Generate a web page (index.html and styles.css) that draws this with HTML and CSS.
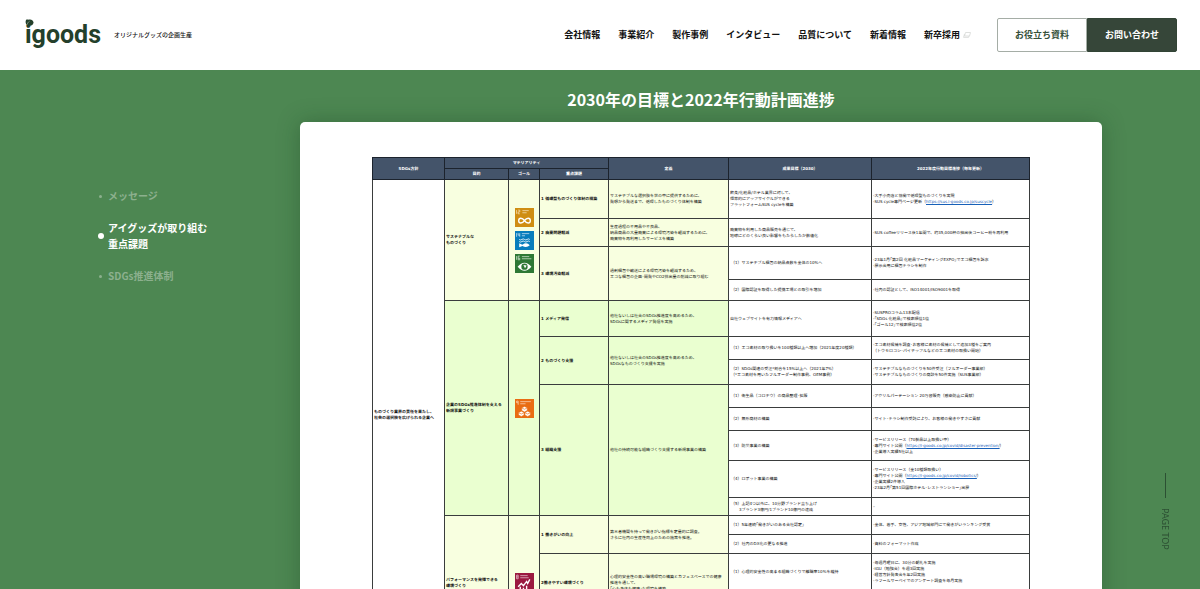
FILE: index.html
```html
<!DOCTYPE html>
<html lang="ja">
<head>
<meta charset="utf-8">
<meta name="viewport" content="width=device-width, initial-scale=1">
<title>アイグッズが取り組む重点課題 | igoods</title>
<link rel="stylesheet" href="styles.css">
</head>
<body>
<header class="header">
  <a class="logo" href="#">igoods<svg class="logo-leaf" viewBox="0 0 9 9" aria-hidden="true"><path d="M1 1C2 0 3 1 4 .6 6 0 8 1 8.600 3.500 8 6 6 7 4.500 6.600L2.500 8.500 2 6C.5 5 .3 2.500 1 1z" fill="#24402b"/><path d="M2.300 5.500C2.500 4 3.300 3 4.500 2.300" stroke="#b9c7bb" stroke-width=".6" fill="none"/></svg></a>
  <p class="tagline">オリジナルグッズの企画生産</p>
  <nav class="nav" aria-label="メイン">
    <a href="#">会社情報</a>
    <a href="#">事業紹介</a>
    <a href="#">製作事例</a>
    <a href="#">インタビュー</a>
    <a href="#">品質について</a>
    <a href="#">新着情報</a>
    <a class="nav-ext" href="#">新卒採用<svg width="8" height="6" viewBox="0 0 8 6" aria-hidden="true"><path d="M2.500.5h5l-1 3.500h-5zM1.500 2L.6 5.400h5L6 4" fill="none" stroke="#d5d8d5" stroke-width=".8"/></svg></a>
  </nav>
  <div class="actions">
    <a class="btn" href="#">お役立ち資料</a>
    <a class="btn btn-dark" href="#">お問い合わせ</a>
  </div>
</header>
<div class="layout">
  <nav class="side" aria-label="ページ内">
    <a href="#message">メッセージ</a>
    <a class="current" href="#issues">アイグッズが取り組む<br>重点課題</a>
    <a href="#system">SDGs推進体制</a>
  </nav>
  <main class="main" id="issues">
    <h1>2030年の目標と2022年行動計画進捗</h1>
    <div class="card">
      <table>
        <colgroup><col class="c-policy"><col class="c-aim"><col class="c-goal"><col class="c-issue"><col class="c-def"><col class="c-target"><col class="c-plan"></colgroup>
        <thead>
          <tr class="h11"><th rowspan="2">SDGs方針</th><th colspan="3">マテリアリティ</th><th rowspan="2">定義</th><th rowspan="2">成果目標（2030）</th><th rowspan="2">2022年度行動目標進捗（毎年更新）</th></tr>
          <tr class="h11"><th>目的</th><th>ゴール</th><th>重点課題</th></tr>
        </thead>
        <tbody>
          <tr class="h39">
            <td class="b" rowspan="17">ものづくり業界の責任を果たし、<br>社会の選択肢を広げられる企業へ</td>
            <td class="b y" rowspan="4">サステナブルな<br>ものづくり</td>
            <td class="goal y" rowspan="4"><div class="tiles">
              <svg class="tile" viewBox="0 0 18 18" role="img" aria-label="目標12"><rect width="18" height="18" fill="#cf8d12"/><path d="M1.500 2v3.500M3 2h1.500v1.700H3v1.800h1.500M7 2.500h6M7 4.500h4" stroke="#f5e3bd" stroke-width=".7" fill="none"/><path d="M9 12C7 9 3.500 9 3.500 12s3.500 3 5.500 0 5.500-3 5.500 0-3.500 3-5.500 0z" fill="none" stroke="#fff" stroke-width="1.300"/></svg>
              <svg class="tile" viewBox="0 0 18 18" role="img" aria-label="目標14"><rect width="18" height="18" fill="#087dbc"/><path d="M1.500 2v3.500M3 2v2h1.700M4.500 2v3.500M6.500 2.500h7M6.500 4.500h3" stroke="#d0e7f4" stroke-width=".7" fill="none"/><path d="M4 8q1.200 1 2.500 0t2.500 0 2.500 0 2.500 0M4 10q1.200 1 2.500 0t2.500 0 2.500 0 2.500 0" stroke="#fff" stroke-width=".8" fill="none"/><path d="M4 11.500l3 1.500q4-3 7 .5-3 3-7 .7L4 15.500z" fill="#fff"/></svg>
              <svg class="tile" viewBox="0 0 18 18" role="img" aria-label="目標16"><rect width="18" height="18" fill="#2e7835"/><path d="M1.500 2v3.500M3 5.500V2h1.500M3 4h1.500v1.500H3M6.500 2.500h7M6.500 4.500h9" stroke="#d5e6d5" stroke-width=".7" fill="none"/><path d="M2.500 12Q9 4.500 15.500 12 9 19.500 2.500 12z" fill="#fff"/><circle cx="9" cy="12" r="3" fill="#2e7835"/><path d="M8 10.500l3 .5-1.500 2.500z" fill="#fff"/></svg>
            </div></td>
            <td class="b y">1 循環型ものづくり体制の構築</td>
            <td class="y">サステナブルな選択肢を世の中に提供するために、<br>発想から発送まで、循環したものづくり体制を構築</td>
            <td>飲食/化粧品/ホテル業界に対して、<br>恒常的にアップサイクルができる<br>プラットフォームSUS cycleを構築</td>
            <td>-大手小売店と協働で循環型ものづくりを実現<br>-SUS cycle専門ページ更新（<a href="#">https://sus.i-goods.co.jp/suscycle</a>）</td>
          </tr>
          <tr class="h28"><td class="b y">2 廃棄問題軽減</td><td class="y">生産過程の不用品や不良品、<br>納品商品の大量廃棄による環境汚染を軽減するために、<br>廃棄物を再利用したサービスを構築</td><td>廃棄物を利用した商品販売を通じて、<br>地球にどのくらい良い影響をもたらしたか数値化</td><td>-SUS coffeeリリース後1年間で、約35,000杯の抽出後コーヒー粉を再利用</td></tr>
          <tr class="h33"><td class="b y" rowspan="2">3 環境汚染軽減</td><td class="y" rowspan="2">過剰梱包や輸送による環境汚染を軽減するため、<br>エコな梱包の企画･開発やCO2排出量の削減に取り組む</td><td class="n">（1）サステナブル梱包の納品点数を全体の10%へ</td><td>-23年1月｢第2回 化粧品マーケティングEXPO｣でエコ梱包を訴求<br>-展示会用に梱包チラシを制作</td></tr>
          <tr class="h21"><td class="n">（2）国際認証を取得した提携工場との取引を増加</td><td>-社内の認証として、ISO14001/ISO9001を取得</td></tr>
          <tr class="h36">
            <td class="b g" rowspan="8">企業のSDGs推進体制を支える<br>新規事業づくり</td>
            <td class="goal g" rowspan="8"><div class="tiles"><svg class="tile" viewBox="0 0 18 18" role="img" aria-label="目標9"><rect width="18" height="18" fill="#e96c13"/><path d="M1.500 3.500h1.500V2H1.500v1.500M3 3.500v2M5 2.500h10M5 4.500h5" stroke="#f9d6bc" stroke-width=".7" fill="none"/><path d="M9 7l2.600 1.400v2.500L9 12.300l-2.600-1.400V8.400zM6 11.500l2.600 1.400v2.300L6 16.500l-2.600-1.300v-2.300zM12 11.500l2.600 1.400v2.300L12 16.500l-2.600-1.300v-2.300z" fill="#fff" stroke="#e96c13" stroke-width=".5"/><path d="M6.500 8.500L9 9.700l2.500-1.200M3.500 13L6 14.200 8.500 13M9.500 13l2.500 1.200 2.500-1.200" fill="none" stroke="#e96c13" stroke-width=".6"/></svg></div></td>
            <td class="b g">1 メディア発信</td><td class="g">他社ないしは社会のSDGs推進度を高めるため、<br>SDGsに関するメディア発信を実施</td><td>自社ウェブサイトを有力情報メディアへ</td><td>-SUSPROコラム13本配信<br>-｢SDGs 化粧品｣で検索順位1位<br>-｢ゴール12｣で検索順位2位</td>
          </tr>
          <tr class="h23"><td class="b g" rowspan="2">2 ものづくり支援</td><td class="g" rowspan="2">他社ないしは社会のSDGs推進度を高めるため、<br>SDGsなものづくり支援を実施</td><td class="n">（1）エコ素材の取り扱いを100種類以上へ増加（2021年度20種類）</td><td>-エコ素材候補を調査･お客様に素材の候補として追加3種をご案内<br>（トウモロコシ･パイナップルなどのエコ素材の取扱い開始）</td></tr>
          <tr class="h25"><td class="n">（2）SDGs関連の受注*割合を15%以上へ（2021年7%）<br>（*エコ素材を用いたフルオーダー制作事例、OEM事例）</td><td>-サステナブルなものづくりを50件受注（フルオーダー事業部）<br>-サステナブルなものづくりの商談を50件実施（SUS事業部）</td></tr>
          <tr class="h23"><td class="b g" rowspan="5">3 組織支援</td><td class="g" rowspan="5">他社の持続可能な組織づくり支援する新規事業の構築</td><td class="n">（1）衛生品（コロナウ）の商品整理･拡販</td><td>-アクリルパーテーション 20万台販売（感染防止に貢献）</td></tr>
          <tr class="h23"><td class="n">（2）無形商材の構築</td><td>-サイト･チラシ制作受託により、お客様の働きやすさに貢献</td></tr>
          <tr class="h30"><td class="n">（3）防災事業の構築</td><td>-サービスリリース（70製品以上取扱い中）<br>-専門サイト公開（<a href="#">https://i-goods.co.jp/covid/disaster-prevention/</a>）<br>-企業導入実績5社以上</td></tr>
          <tr class="h37"><td class="n">（4）ロボット事業の構築</td><td>-サービスリリース（全10種類取扱い）<br>-専門サイト公開（<a href="#">https://i-goods.co.jp/covid/robotics/</a>）<br>-企業実績2件導入<br>-23年2月｢第51回国際ホテル･レストランショー｣出展</td></tr>
          <tr class="h18"><td class="n">（5）上記4つ以外に、10分野ブランド立ち上げ<br>　　3ブランド3億円/1ブランド10億円の達成</td><td>–</td></tr>
          <tr class="h19">
            <td class="b y" rowspan="5">パフォーマンスを発揮できる<br>環境づくり</td>
            <td class="goal y" rowspan="5"><div class="tiles"><svg class="tile" viewBox="0 0 18 18" role="img" aria-label="目標8"><rect width="18" height="18" fill="#9a1a3f"/><path d="M1.500 2H3v3.500H1.500V2M1.500 3.700H3M5 2.500h7M5 4.500h8" stroke="#e6c5cf" stroke-width=".7" fill="none"/><path d="M3 13l3-3 2 2 3-4 1 2 2-4M5 16v-3M8 16v-2M11 16v-4" stroke="#fff" stroke-width="1.300" fill="none"/></svg></div></td>
            <td class="b y" rowspan="2">1 働きがいの向上</td><td class="y" rowspan="2">第三者機関を持って働きがい指標を定量的に調査。<br>さらに社内の生産性向上のための施策を推進。</td><td class="n">（1）5年連続｢働きがいのある会社認定｣</td><td>-全体、若手、女性、アジア地域部門にて働きがいランキング受賞</td>
          </tr>
          <tr class="h19"><td class="n">（2）社内のDX化の更なる推進</td><td>-資料のフォーマット作成</td></tr>
          <tr class="h37"><td class="b y" rowspan="2">2働きやすい環境づくり</td><td class="y" rowspan="2">心理的安全性の高い職場環境の構築とカフェスペースでの健康<br>推進を通して、<br>｢心も身体も健康｣な環境を構築</td><td class="n">（1）心理的安全性の高まる組織づくりで離職率10%を維持</td><td>-毎週月曜日に、30分の朝礼を実施<br>-IGU（勉強会）を週3回実施<br>-経営方針発表会を年2回実施<br>-ラフールサーベイでのアンケート調査を毎月実施</td></tr>
          <tr class="h21"><td></td><td></td></tr>
          <tr class="h38"><td class="y"></td><td class="y"></td><td></td><td></td></tr>
        </tbody>
      </table>
    </div>
  </main>
</div>
<a class="page-top" href="#">PAGE TOP</a>
</body>
</html>
```
FILE: styles.css
```css
* { box-sizing: border-box; }

body {
  margin: 0;
  height: 100vh;
  display: flex;
  flex-direction: column;
  overflow: hidden;
  background: #4d8752;
  color: #111;
  font-family: "Noto Sans CJK JP", sans-serif;
}

a { color: inherit; text-decoration: none; }

/* Header */
.header {
  flex: none;
  display: flex;
  align-items: center;
  min-height: 70px;
  padding: 0 23px 0 25px;
  background: #fff;
}
.logo {
  position: relative;
  color: #24402b;
  font: bold 25px/32px Roboto, sans-serif;
}
.logo-leaf {
  position: absolute;
  left: 0;
  top: 0;
  width: 9px;
  height: 9px;
}
.tagline { margin: 0 0 0 13px; font-size: 6px; line-height: 10px; font-weight: 500; }
.nav {
  display: flex;
  gap: 18px;
  margin-left: auto;
  font-size: 9px;
  line-height: 14px;
  font-weight: 700;
}
.nav-ext { display: flex; align-items: center; gap: 3px; }
.actions { display: flex; margin-left: 26px; }
.btn {
  width: 90px;
  border: 1px solid #a5ada6;
  border-radius: 2px 0 0 2px;
  color: #35503a;
  font-size: 9px;
  line-height: 32px;
  font-weight: 700;
  text-align: center;
}
.btn-dark {
  border-color: #324435;
  border-radius: 0 2px 2px 0;
  background: #364639;
  color: #fff;
}

/* Page body */
.layout {
  flex: 1;
  min-height: 0;
  overflow: hidden;
  display: grid;
  grid-template-columns: 25% 1fr;
}
.main { margin-right: 98px; }
.side {
  display: flex;
  flex-direction: column;
  gap: 16px;
  padding: 118px 0 0 98px;
  color: #8cb08e;
  font-size: 10px;
  line-height: 16px;
  font-weight: 700;
}
.side a { display: flex; align-items: center; }
.side a::before {
  content: "";
  flex: none;
  width: 3px;
  height: 3px;
  margin: 0 6px 0 1px;
  border-radius: 50%;
  background: currentColor;
}
.side .current { color: #fff; display: grid; grid-template-columns: 10px 1fr; }
.side .current::before { width: 6px; height: 6px; margin: 0; grid-row: 1 / 3; }

.main h1 {
  margin: 0;
  padding: 17px 0 11px;
  color: #fff;
  font-size: 16px;
  line-height: 24px;
  font-weight: 700;
  text-align: center;
}
.card {
  padding: 35px 72px;
  border-radius: 5px;
  background: #fff;
  box-shadow: 0 0 22px rgba(20, 60, 30, .35);
}

/* Plan table */
table {
  width: 100%;
  table-layout: fixed;
  border-collapse: collapse;
  font-family: "DejaVu Sans", "Noto Sans CJK JP", sans-serif;
  font-size: 4px;
  line-height: 6px;
  text-rendering: geometricPrecision;
}
th, td {
  padding: 0 1px;
  border: 1px solid #3a3d3d;
  text-align: left;
  vertical-align: middle;
  white-space: nowrap;
  font-weight: 400;
}
th {
  background: #44546a;
  border-color: #1c232d;
  color: #fff;
  font-weight: 700;
  text-align: center;
}
td a { color: #1760b8; text-decoration: underline; }
td.n { padding-left: 2px; }
td.b { font-weight: 700; }
.y { background: #f8ffe0; }
.g { background: #eaffd0; }
td.goal { padding: 0; }
.tiles { display: flex; flex-direction: column; align-items: center; gap: 4px; }
.tile { display: block; width: 19px; height: 19px; }

.c-policy { width: 72px; }
.c-aim { width: 64px; }
.c-goal { width: 31px; }
.c-issue { width: 69px; }
.c-def { width: 120px; }
.c-target { width: 143px; }
.c-plan { width: 158px; }

.h11 { height: 11px; }
.h18 { height: 18px; }
.h19 { height: 19px; }
.h21 { height: 21px; }
.h23 { height: 23px; }
.h25 { height: 25px; }
.h28 { height: 28px; }
.h30 { height: 30px; }
.h33 { height: 33px; }
.h36 { height: 36px; }
.h37 { height: 37px; }
.h38 { height: 38px; }
.h39 { height: 39px; }

/* Back to top */
.page-top {
  position: fixed;
  right: 30px;
  bottom: 39px;
  display: flex;
  align-items: center;
  gap: 10px;
  color: #2c5033;
  font: 9px/10px "Noto Sans", sans-serif;
  writing-mode: vertical-rl;
}
.page-top::before {
  content: "";
  width: 1px;
  height: 25px;
  background: currentColor;
}
```
